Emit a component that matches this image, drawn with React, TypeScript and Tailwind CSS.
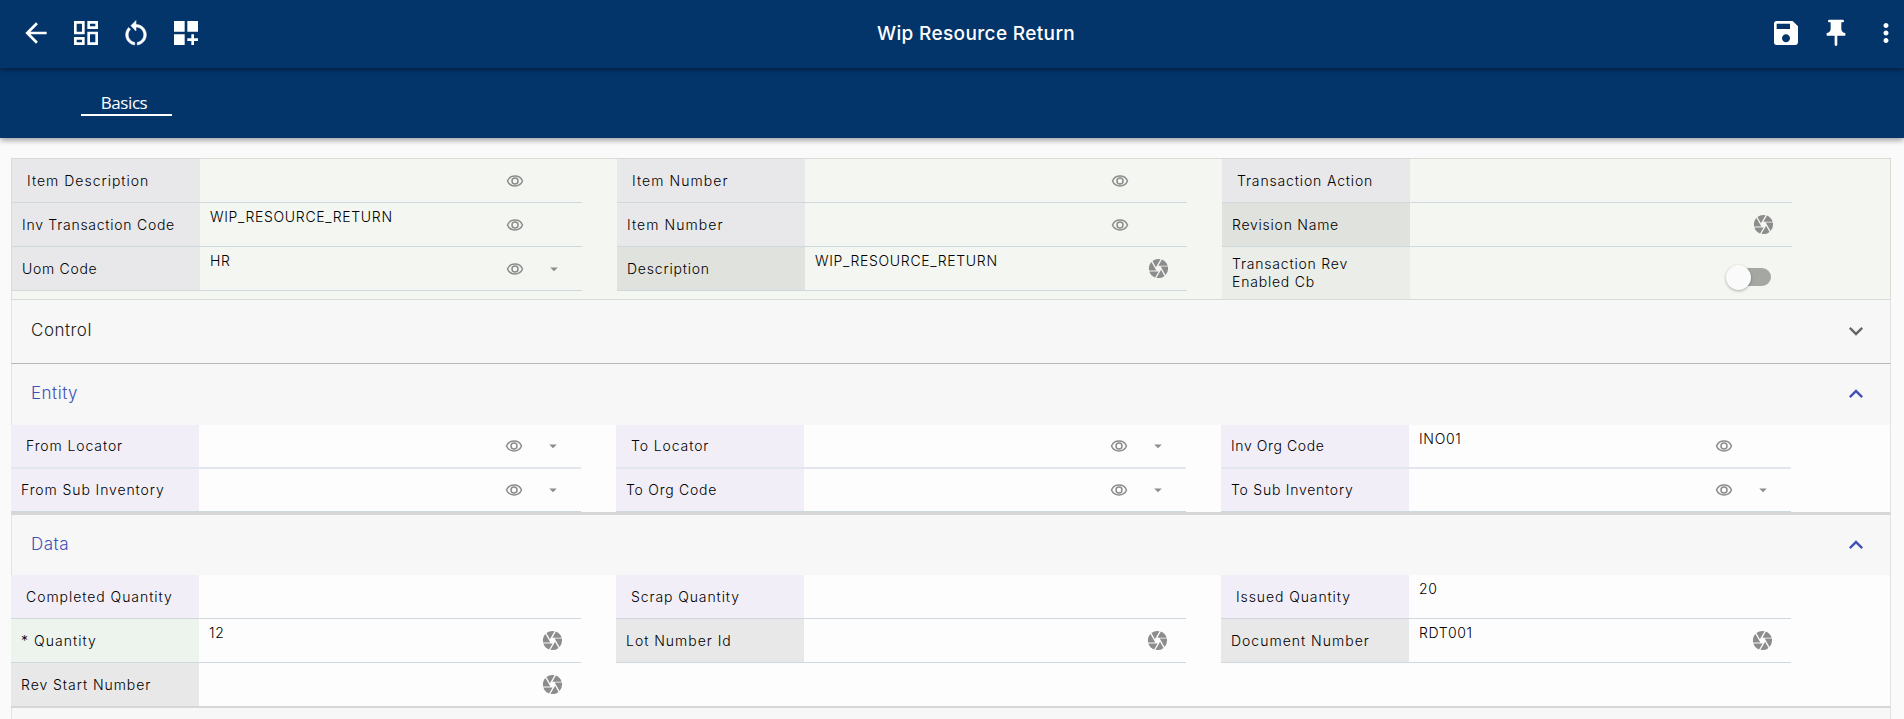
import { MdArrowBack, MdOutlineDashboard, MdSave, MdPushPin, MdMoreVert, MdCamera, MdExpandMore, MdExpandLess, MdArrowDropDown } from "react-icons/md";

type Item = {
  label: string;
  value?: string;
  tone: string;
  indent?: boolean;
  eye?: boolean;
  caret?: boolean;
  lens?: boolean;
  toggle?: boolean;
  ls?: string;
};

function RestartIcon() {
  return (
    <svg viewBox="0 0 24 24" className="h-[31px] w-8" fill="currentColor" stroke="currentColor" strokeWidth="0.4">
      <path d="M12 5V2L8 6l4 4V7c3.31 0 6 2.69 6 6 0 2.97-2.17 5.43-5 5.91v2.02c3.95-.49 7-3.85 7-7.93 0-4.42-3.58-8-8-8zM6 13c0-1.65.67-3.15 1.76-4.24L6.34 7.34C4.9 8.79 4 10.79 4 13c0 4.08 3.05 7.44 7 7.93v-2.02c-2.83-.48-5-2.94-5-5.91z" />
    </svg>
  );
}

function WidgetsAddIcon() {
  return (
    <svg viewBox="0 0 24 24" className="size-8" fill="currentColor">
      <path d="M3 3h8v8H3zM13 3h8v8h-8zM3 13h8v8H3zM18 13h-2v3h-3v2h3v3h2v-3h3v-2h-3z" />
    </svg>
  );
}

function EyeIcon() {
  return (
    <svg viewBox="0 0 24 24" className="size-[18px]" fill="none" stroke="currentColor" strokeWidth="2">
      <path d="M2 12C3.7 7.9 7.6 5.4 12 5.4s8.3 2.5 10 6.6c-1.7 4.1-5.6 6.6-10 6.6S3.7 16.1 2 12z" />
      <circle cx="12" cy="12" r="4" />
    </svg>
  );
}

function Field({ item, height }: { item: Item; height: string }) {
  return (
    <div className={`flex w-[570px] border-[#cfd8dc] ${height}`}>
      <div className={`flex w-[188px] shrink-0 items-center text-[14px] leading-[18px] ${item.tone} ${item.indent ? "pl-[15px]" : "pl-[10px]"} ${item.ls ?? "tracking-[0.9px]"}`}>
        <span className="whitespace-pre-line">{item.label}</span>
      </div>
      <div className="flex min-w-0 flex-1 text-[#8c8c8c]">
        <span className="flex-1 pl-[10px] pt-[5px] text-[14px] leading-[18px] tracking-[0.68px] text-black">{item.value}</span>
        {item.toggle ? (
          <span className="mr-[21px] mt-[10px] flex h-10 w-[45px] items-center">
            <span className="z-10 size-[25px] shrink-0 rounded-full bg-[#fafafa] shadow-[0_1px_3px_rgba(0,0,0,0.3)]" />
            <span className="-ml-3 h-[18px] w-[32px] rounded-full bg-[#a5a7a2]" />
          </span>
        ) : (
          <>
            <span className="flex w-[38px] items-center justify-center">{item.eye && <EyeIcon />}</span>
            <span className="mr-[9px] flex w-[39px] items-center justify-center">
              {item.caret && <MdArrowDropDown className="size-[18px]" />}
              {item.lens && <MdCamera className="size-[23px]" />}
            </span>
          </>
        )}
      </div>
    </div>
  );
}

function Column({ items, heights }: { items: Item[]; heights: string[] }) {
  return (
    <div className="w-[605px] shrink-0">
      {items.map((it, i) => (
        <Field key={i} item={it} height={heights[i]} />
      ))}
    </div>
  );
}

function PanelHeader({ title, open, size }: { title: string; open: boolean; size: string }) {
  return (
    <div className={`flex items-center justify-between bg-[#f7f7f7] pl-[19px] pr-[20px] ${size} ${open ? "text-[#3f51b5]" : "text-[#222]"}`}>
      <span className="text-[17px] tracking-[0.5px]">{title}</span>
      {open ? <MdExpandLess className="size-[28px]" /> : <MdExpandMore className="size-[28px] text-[#666]" />}
    </div>
  );
}

const G = "bg-[#e8e8eb]";
const D = "bg-[#e0e2dd]";
const L = "bg-[#f1eef8]";
const N = "bg-[#e8e8e8]";

const summary: Item[][] = [
  [
    { label: "Item Description", tone: G, indent: true, eye: true, ls: "tracking-[1px]" },
    { label: "Inv Transaction Code", value: "WIP_RESOURCE_RETURN", tone: G, eye: true, ls: "tracking-[0.74px]" },
    { label: "Uom Code", value: "HR", tone: G, eye: true, caret: true, ls: "tracking-[0.7px]" },
  ],
  [
    { label: "Item Number", tone: G, indent: true, eye: true, ls: "tracking-[1.05px]" },
    { label: "Item Number", tone: G, eye: true, ls: "tracking-[1.05px]" },
    { label: "Description", value: "WIP_RESOURCE_RETURN", tone: D, lens: true, ls: "tracking-[0.8px]" },
  ],
  [
    { label: "Transaction Action", tone: G, indent: true, ls: "tracking-[0.85px]" },
    { label: "Revision Name", tone: D, lens: true, ls: "tracking-[0.75px]" },
    { label: "Transaction Rev\nEnabled Cb", tone: "bg-[#ebede8]", toggle: true, ls: "tracking-[0.8px]" },
  ],
];

const entity: Item[][] = [
  [
    { label: "From Locator", tone: L, indent: true, eye: true, caret: true },
    { label: "From Sub Inventory", tone: L, eye: true, caret: true },
  ],
  [
    { label: "To Locator", tone: L, indent: true, eye: true, caret: true },
    { label: "To Org Code", tone: L, eye: true, caret: true, ls: "tracking-[0.75px]" },
  ],
  [
    { label: "Inv Org Code", value: "INO01", tone: L, eye: true, ls: "tracking-[0.6px]" },
    { label: "To Sub Inventory", tone: L, eye: true, caret: true, ls: "tracking-[0.75px]" },
  ],
];

const data: Item[][] = [
  [
    { label: "Completed Quantity", tone: L, indent: true, ls: "tracking-[0.95px]" },
    { label: "* Quantity", value: "12", tone: "bg-[#edf4ed]", lens: true, ls: "tracking-[1.05px]" },
    { label: "Rev Start Number", tone: N, lens: true, ls: "tracking-[0.95px]" },
  ],
  [
    { label: "Scrap Quantity", tone: L, indent: true },
    { label: "Lot Number Id", tone: N, lens: true, ls: "tracking-[0.98px]" },
  ],
  [
    { label: "Issued Quantity", value: "20", tone: L, indent: true },
    { label: "Document Number", value: "RDT001", tone: N, lens: true, ls: "tracking-[1px]" },
  ],
];

export default function App() {
  return (
    <div className="h-[719px] overflow-hidden bg-[#fafafa] font-['Inter',sans-serif] font-[350] text-black">
      <header className="relative z-20 flex h-[68px] items-center bg-[#03356b] text-white shadow-[0_2px_5px_rgba(0,0,0,0.4)]">
        <div className="flex w-[877px] items-center pl-5 pb-[2px]">
          <span className="flex w-[50px]"><MdArrowBack className="size-8" /></span>
          <span className="flex w-[50px]"><MdOutlineDashboard className="size-8" /></span>
          <span className="flex w-[50px]"><RestartIcon /></span>
          <WidgetsAddIcon />
        </div>
        <h1 className="text-[19px] font-medium tracking-[0.36px]">Wip Resource Return</h1>
        <div className="flex flex-1 items-center justify-end pb-[2px]">
          <MdSave className="size-8" />
          <MdPushPin className="ml-[18px] size-8" />
          <MdMoreVert className="ml-[19px] mr-[3px] size-[30px]" />
        </div>
      </header>

      <nav className="relative z-10 flex h-[70px] bg-[#03356b] pl-[81px] pt-5 text-white shadow-[0_2px_6px_rgba(0,0,0,0.4)]">
        <span className="h-[28px] w-[91px] border-b-2 border-white pt-[3px] pr-[5px] text-center font-['Open_Sans',sans-serif] text-[17px] leading-[24px] font-normal tracking-[-0.4px]">Basics</span>
      </nav>

      <main className="mx-[11px] mr-[13px] mt-5">
        <section className="flex h-[142px] overflow-hidden border border-[#d9dbd7] bg-[#f3f6f1]">
          {summary.map((c, i) => (
            <Column key={i} items={c} heights={["h-11 border-b", "h-11 border-b", i === 2 ? "h-[53px] border-b" : "h-11 border-b"]} />
          ))}
        </section>

        <div className="border-x border-b border-x-[#e2e2e2] border-b-[#b5b5b5]">
          <PanelHeader title="Control" open={false} size="h-[63px] pb-px" />
        </div>

        <section className="border-r border-b-[3px] border-r-[#e2e2e2] border-b-[#d6d6d6] bg-[#fdfdfd]">
          <PanelHeader title="Entity" open size="h-[61px] border-l border-[#e2e2e2] pb-[2px]" />
          <div className="flex">
            {entity.map((c, i) => (
              <Column key={i} items={c} heights={["h-11 border-b-2 border-[#e3e6ee]", "h-[43px] border-b"]} />
            ))}
          </div>
        </section>

        <section className="border-r border-b-2 border-r-[#e2e2e2] border-b-[#d6d6d6] bg-[#fdfdfd]">
          <PanelHeader title="Data" open size="h-[60px] border-l border-[#e2e2e2] pb-px" />
          <div className="flex">
            {data.map((c, i) => (
              <Column key={i} items={c} heights={["h-11 border-b", "h-11 border-b", "h-[43px]"]} />
            ))}
          </div>
        </section>
        <div className="h-4 border-x border-[#e2e2e2] bg-[#f7f7f7]" />
      </main>
    </div>
  );
}
